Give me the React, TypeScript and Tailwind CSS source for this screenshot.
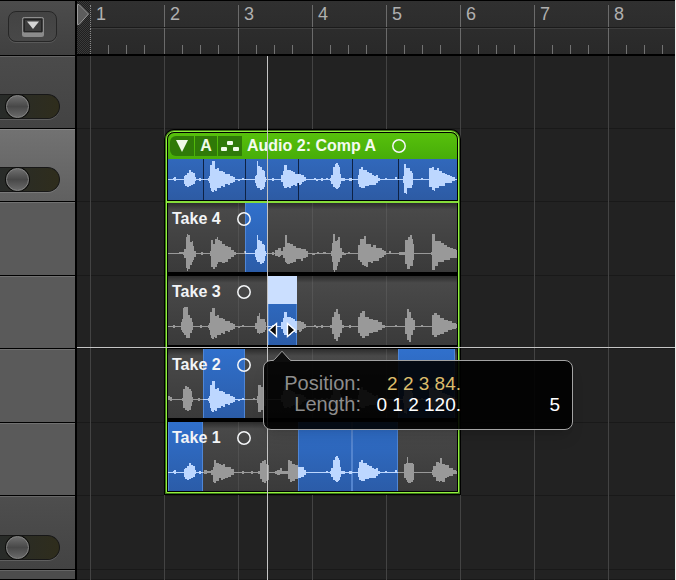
import React, { useState } from 'react';

// [x, height above the centre line, height below it]
type WavePoint = [number, number, number];

interface Range {
  from: number;
  to: number;
}

interface Take {
  id: string;
  name: string;
  wave: WavePoint[];
  picks: Range[];
  splits?: number[];
  selected?: Range;
}

interface Track {
  id: string;
  height: string;
  background: string;
  hasSlider?: boolean;
}

const REGION_WIDTH = 289;

const bars = [1, 2, 3, 4, 5, 6, 7, 8];

const tracks: Track[] = [
  { id: 'track-1', height: 'h-[73px]', background: 'bg-linear-to-b from-[#4b4b4b] to-[#434343]', hasSlider: true },
  { id: 'track-2', height: 'h-[73px]', background: 'bg-linear-to-b from-[#727272] to-[#606060]', hasSlider: true },
  { id: 'take-4', height: 'h-[74px]', background: 'bg-[#5a5a5a]' },
  { id: 'take-3', height: 'h-[73px]', background: 'bg-[#5a5a5a]' },
  { id: 'take-2', height: 'h-[74px]', background: 'bg-[#5a5a5a]' },
  { id: 'take-1', height: 'h-[73px]', background: 'bg-[#5a5a5a]' },
  { id: 'track-3', height: 'h-[74px]', background: 'bg-linear-to-b from-[#4e4e4e] to-[#434343]', hasSlider: true },
  { id: 'track-4', height: 'flex-1', background: 'bg-[#4c4c4c]' },
];

const hitA: WavePoint[] = [[5, 1, 0], [6, 2, 1], [8, 0, 0], [15, 0, 0], [16, 3, 4], [17, 4, 6], [19, 6, 7], [21, 9, 6], [23, 7, 5], [25, 6, 4], [27, 2, 1], [28, 0, 0], [31, 1, 1], [33, 0, 0]];
const hitB: WavePoint[] = [[38, 0, 0], [40, 1, 1], [41, 3, 3], [42, 14, 8], [43, 14, 11], [44, 18, 12], [46, 18, 10], [47, 10, 11], [49, 11, 8], [51, 8, 8], [53, 8, 6], [55, 7, 7], [57, 5, 4], [60, 5, 5], [62, 3, 3], [65, 2, 2], [67, 0, 0], [70, 0, 1], [72, 0, 0], [74, 1, 0], [76, 0, 0]];
const hitC: WavePoint[] = [[84, 0, 0], [87, 3, 3], [88, 4, 6], [89, 18, 8], [90, 13, 8], [92, 12, 10], [94, 9, 9], [96, 8, 7], [97, 2, 2], [98, 0, 0], [104, 1, 1], [106, 0, 0]];
const hitD: WavePoint[] = [[112, 0, 0], [113, 4, 2], [115, 8, 6], [116, 14, 8], [118, 14, 8], [119, 9, 7], [121, 9, 8], [123, 8, 6], [125, 7, 5], [127, 5, 6], [129, 5, 3], [131, 5, 5], [133, 4, 4], [134, 4, 2], [136, 2, 1], [138, 0, 0], [146, 1, 0], [148, 0, 1], [150, 0, 0], [153, 1, 1], [155, 0, 0]];
const hitE: WavePoint[] = [[158, 1, 0], [160, 0, 0], [162, 1, 1], [163, 4, 4], [165, 12, 7], [167, 15, 8], [168, 16, 9], [170, 14, 8], [171, 12, 7], [172, 5, 4], [173, 1, 1], [177, 0, 0], [181, 1, 1], [184, 0, 0]];
const hitF: WavePoint[] = [[188, 0, 0], [190, 4, 4], [191, 10, 7], [193, 12, 8], [195, 9, 8], [197, 9, 6], [199, 7, 6], [201, 6, 5], [204, 4, 5], [206, 3, 5], [208, 4, 3], [210, 1, 1], [212, 0, 0], [217, 1, 0], [219, 0, 0], [227, 2, 0], [229, 0, 0]];
const hitG: WavePoint[] = [[234, 0, 0], [235, 3, 3], [236, 15, 13], [238, 11, 14], [239, 11, 8], [242, 8, 8], [244, 6, 5], [245, 0, 0], [251, 0, 0], [253, 1, 0], [255, 0, 0]];
const hitH: WavePoint[] = [[260, 0, 0], [261, 11, 7], [264, 12, 10], [266, 9, 11], [267, 9, 8], [269, 11, 8], [271, 8, 6], [274, 6, 6], [277, 5, 3], [279, 4, 3], [282, 3, 3], [284, 2, 1], [287, 0, 0]];

const compWave = [...hitA, ...hitB, ...hitC, ...hitD, ...hitE, ...hitF, ...hitG, ...hitH];

const take4Wave: WavePoint[] = [
  [9, 0, 0], [11, 1, 0], [15, 1, 1], [16, 4, 4], [18, 16, 14], [19, 19, 17], [20, 18, 15], [22, 11, 11], [24, 12, 8], [25, 7, 6], [26, 2, 3], [28, 0, 0], [33, 1, 1], [35, 0, 0],
  [42, 2, 2], [43, 13, 13], [45, 9, 15], [47, 14, 13], [49, 16, 10], [50, 13, 8], [52, 12, 8], [54, 9, 9], [57, 7, 8], [60, 6, 5], [63, 3, 3], [66, 1, 1], [68, 0, 0], [74, 0, 0], [76, 2, 0], [78, 0, 0],
  ...hitC,
  [107, 3, 2], [110, 5, 3], [112, 5, 2], [113, 2, 1], [115, 6, 4], [117, 18, 8], [118, 18, 9], [119, 10, 10], [122, 9, 9], [125, 7, 8], [128, 5, 5], [131, 5, 5], [133, 4, 7], [135, 4, 4], [138, 2, 3], [140, 0, 0], [144, 0, 1], [147, 0, 0], [149, 1, 0], [151, 0, 0], [155, 1, 0], [158, 0, 0],
  [163, 2, 2], [164, 10, 8], [165, 19, 16], [166, 19, 18], [167, 12, 16], [169, 13, 12], [170, 16, 8], [172, 5, 4], [174, 1, 1], [176, 0, 1], [178, 0, 0], [180, 1, 0], [182, 0, 0],
  [188, 0, 0], [190, 8, 6], [192, 14, 8], [194, 14, 11], [196, 17, 12], [198, 9, 13], [200, 9, 8], [203, 6, 9], [205, 8, 7], [208, 5, 7], [211, 5, 4], [214, 3, 3], [216, 2, 1], [218, 0, 0], [221, 2, 0], [223, 0, 0], [231, 1, 1],
  [236, 1, 1], [237, 13, 10], [239, 13, 15], [240, 16, 15], [242, 18, 12], [244, 14, 12], [245, 9, 6], [246, 0, 0], [260, 0, 0],
  [263, 1, 1], [264, 19, 16], [267, 12, 12], [270, 12, 8], [273, 10, 8], [276, 8, 6], [279, 6, 6], [282, 5, 4], [285, 4, 4], [288, 3, 4],
];

const take3Wave: WavePoint[] = [
  [5, 1, 1], [7, 0, 0], [13, 4, 3], [14, 7, 5], [15, 18, 6], [16, 19, 8], [18, 19, 11], [20, 11, 11], [22, 8, 6], [24, 4, 3], [25, 0, 0], [32, 1, 1], [34, 0, 0],
  ...hitB,
  [84, 0, 0], [87, 3, 2], [89, 10, 6], [91, 13, 7], [92, 7, 6], [95, 7, 5], [97, 4, 3], [98, 0, 0], [104, 1, 1], [106, 0, 0],
  ...hitD,
  [162, 1, 1], [164, 9, 7], [166, 14, 12], [168, 17, 14], [170, 12, 10], [172, 6, 6], [174, 1, 1], [176, 0, 0], [181, 1, 1], [183, 0, 0],
  [190, 9, 6], [192, 13, 9], [194, 15, 11], [197, 9, 9], [201, 7, 6], [205, 6, 5], [210, 4, 3], [214, 1, 1], [217, 0, 0], [227, 1, 0], [229, 0, 0],
  [237, 8, 7], [239, 17, 13], [241, 14, 15], [243, 8, 8], [245, 6, 3], [247, 0, 0], [253, 1, 0], [255, 0, 0],
  [264, 11, 8], [266, 13, 10], [269, 11, 8], [272, 8, 7], [276, 6, 5], [280, 5, 3], [284, 3, 2], [288, 2, 1],
];

const take2Wave: WavePoint[] = [
  [0, 3, 0], [2, 2, 1], [4, 0, 0], [14, 1, 1], [15, 10, 8], [17, 13, 10], [19, 12, 11], [21, 10, 10], [23, 8, 6], [24, 2, 2], [25, 0, 0], [30, 1, 1], [32, 0, 0],
  ...hitB,
  [85, 1, 0], [87, 0, 0], [89, 3, 3], [90, 14, 12], [93, 12, 10], [96, 9, 6], [98, 0, 0],
  ...hitD, ...hitE, ...hitF, ...hitG, ...hitH,
];

const take1Wave: WavePoint[] = [
  ...hitA,
  [36, 2, 1], [39, 1, 0], [43, 2, 2], [45, 5, 9], [46, 12, 10], [48, 9, 8], [51, 8, 5], [53, 7, 7], [55, 8, 6], [57, 5, 5], [60, 5, 4], [63, 3, 2], [66, 0, 0], [74, 1, 1], [76, 0, 0], [83, 1, 1], [85, 0, 0],
  [90, 1, 1], [92, 9, 6], [94, 11, 9], [96, 12, 10], [98, 8, 8], [100, 7, 7], [101, 0, 0], [107, 1, 1], [109, 2, 2], [112, 4, 1], [114, 1, 1],
  [119, 1, 1], [120, 12, 6], [122, 11, 9], [124, 8, 8], [127, 7, 6], [130, 5, 5], [133, 5, 4], [136, 2, 2], [138, 0, 0],
  ...hitE, ...hitF,
  [235, 0, 0], [236, 8, 5], [238, 9, 7], [239, 15, 9], [240, 9, 10], [243, 9, 9], [245, 8, 7], [246, 0, 0], [262, 0, 0],
  [264, 2, 2], [265, 6, 4], [268, 10, 8], [271, 9, 9], [272, 14, 8], [274, 8, 9], [277, 7, 5], [279, 7, 4], [281, 4, 3], [285, 2, 1], [288, 1, 1],
];

const takes: Take[] = [
  { id: 'take-4', name: 'Take 4', wave: take4Wave, picks: [{ from: 77, to: 100 }] },
  { id: 'take-3', name: 'Take 3', wave: take3Wave, picks: [{ from: 100, to: 129 }], selected: { from: 100, to: 129 } },
  { id: 'take-2', name: 'Take 2', wave: take2Wave, picks: [{ from: 35, to: 77 }, { from: 230, to: 287 }] },
  { id: 'take-1', name: 'Take 1', wave: take1Wave, picks: [{ from: 0, to: 35 }, { from: 130, to: 230 }], splits: [183] },
];

const compSplits = [35, 77, 130, 184, 230];

const percent = (value: number) => `${(value / REGION_WIDTH) * 100}%`;

// Each peak holds its level until the next one, so the outline is stepped
const wavePath = (wave: WavePoint[], center: number) => {
  const top = wave.map(([x, up]) => `H${x}V${center - up - 0.5}`).join('');
  const bottom = [...wave]
    .reverse()
    .map(([x, , down]) => `V${center + down + 0.5}H${x}`)
    .join('');
  return `M0 ${center - 0.5}${top}H${REGION_WIDTH}${bottom}V${center + 0.5}H0Z`;
};

function Waveform({ id, wave, height, center, picks }: { id: string; wave: WavePoint[]; height: number; center: number; picks: Range[] }) {
  const d = wavePath(wave, center);
  return (
    <svg
      className="absolute inset-0 h-full w-full"
      viewBox={`0 0 ${REGION_WIDTH} ${height}`}
      preserveAspectRatio="none"
      aria-hidden="true"
    >
      <clipPath id={`${id}-picks`}>
        {picks.map(pick => (
          <rect key={pick.from} x={pick.from} y={0} width={pick.to - pick.from} height={height} />
        ))}
      </clipPath>
      <path d={d} className="fill-[#999999]" />
      <path d={d} className="fill-[#bdd7ff]" clipPath={`url(#${id}-picks)`} />
    </svg>
  );
}

function RecordDot({ label }: { label: string }) {
  return (
    <button type="button" aria-label={label} className="block">
      <svg width="14" height="14" viewBox="0 0 14 14" fill="none">
        <circle cx="7" cy="7" r="6.200" stroke="#f4f6f8" strokeWidth="1.500" />
      </svg>
    </button>
  );
}

function TrackHeader({ track }: { track: Track }) {
  const [volume, setVolume] = useState(17);

  return (
    <div className={`${track.height} ${track.background} flex shrink-0 flex-col justify-end border-b border-black pb-[9px] shadow-[inset_0_1px_0_rgba(255,255,255,0.14)]`}>
      {track.hasSlider && (
        <input
          type="range"
          aria-label="Volume"
          value={volume}
          onChange={e => setVolume(Number(e.target.value))}
          className="block h-[25px] w-[60px] appearance-none rounded-r-full border border-l-0 border-[#171717] bg-linear-to-r from-[#282b29] to-[#2f2d1c] shadow-[0_1px_0_rgba(255,255,255,0.15)] [&::-webkit-slider-thumb]:h-[23px] [&::-webkit-slider-thumb]:w-[23px] [&::-webkit-slider-thumb]:appearance-none [&::-webkit-slider-thumb]:rounded-full [&::-webkit-slider-thumb]:border [&::-webkit-slider-thumb]:border-[#868686] [&::-webkit-slider-thumb]:bg-linear-to-b [&::-webkit-slider-thumb]:from-[#6e6e6e] [&::-webkit-slider-thumb]:via-[#484848] [&::-webkit-slider-thumb]:to-[#6a6a6a] [&::-webkit-slider-thumb]:shadow-[0_0_0_1px_#0c0c0c]"
        />
      )}
    </div>
  );
}

function Sidebar() {
  return (
    <aside className="flex w-[77px] shrink-0 flex-col border-r-2 border-black">
      <div className="flex h-14 shrink-0 items-start border-y border-black bg-linear-to-b from-[#4c4c4c] to-[#404040] pt-2.5 pl-2">
        <button
          type="button"
          aria-label="Global tracks"
          className="flex h-[31px] w-[49px] items-center justify-center rounded-lg border border-[#262626] bg-linear-to-b from-[#434343] to-[#484848] shadow-[0_1px_0_rgba(255,255,255,0.12)]"
        >
          <svg width="24" height="22" viewBox="0 0 24 22" fill="none">
            <rect x="1" y="1" width="22" height="20" rx="2.5" fill="#8b8b8b" />
            <rect x="1.5" y="1.5" width="21" height="15.5" rx="2" fill="#3d3d3d" stroke="#8f8f8f" />
            <rect x="3.5" y="3.5" width="17" height="12" stroke="#242424" />
            <path d="M6 5.500H18L12 13Z" fill="#d4d4d4" />
          </svg>
        </button>
      </div>
      {tracks.map(track => (
        <TrackHeader key={track.id} track={track} />
      ))}
    </aside>
  );
}

function Ruler() {
  return (
    <div className="relative flex h-14 shrink-0 overflow-hidden border-t border-b-2 border-black bg-linear-to-b from-[#303030] to-[#292929]">
      <div className="w-[13px] shrink-0 bg-[repeating-conic-gradient(#1f1f1f_0_25%,#3a3a3a_0_50%)] bg-[length:2px_2px]">
        <svg className="mt-[3px]" width="13" height="21" viewBox="0 0 13 21">
          <path d="M0.500 0.500H2L11.500 10L2 20.500H0.500Z" fill="#5d5d5d" stroke="#9a9a9a" />
        </svg>
      </div>
      {bars.map(bar => (
        <div key={bar} className="flex w-[74px] shrink-0 flex-col">
          <div className="flex h-[27px] items-center border-b border-[#1b1b1b] pt-1">
            <span className={`flex h-full items-center border-l pl-[5px] text-[18px] leading-none text-[#b0b0b0] ${bar === 1 ? 'border-dotted border-[#8a8a8a]' : 'border-[#6b6b6b]'}`}>
              <span className="-mt-1">{bar}</span>
            </span>
          </div>
          <div className={`flex flex-1 items-end border-l pl-[17px] shadow-[inset_0_1px_0_#3e3e3e] ${bar === 1 ? 'border-dotted border-[#8a8a8a]' : 'border-[#6b6b6b]'}`}>
            <span className="h-[9px] w-[18px] border-l border-[#727272]" />
            <span className="h-[9px] w-[18px] border-l border-[#727272]" />
            <span className="h-[9px] w-[18px] border-l border-[#727272]" />
          </div>
        </div>
      ))}
    </div>
  );
}

function TakeLane({ take }: { take: Take }) {
  return (
    <div className="relative h-[70px] overflow-hidden border-b border-black bg-linear-to-b from-[#2c2c2c] via-[#494949] via-10% to-[#3a3a3a]">
      {/* Bar lines showing through the lane */}
      <div className="absolute inset-y-0 left-[-4px] flex">
        {bars.slice(0, 4).map(bar => (
          <span key={bar} className="w-[74px] border-l border-white/8" />
        ))}
      </div>
      {take.picks.map(pick => (
        <div
          key={pick.from}
          className="absolute inset-y-0 border-x border-[#4f86d6] bg-linear-to-b from-[#3070cc] to-[#2b5ca8]"
          style={{ left: percent(pick.from), width: percent(pick.to - pick.from) }}
        />
      ))}
      {take.splits?.map(split => (
        <div key={split} className="absolute inset-y-0 w-0.5 bg-[#5485cf]" style={{ left: percent(split) }} />
      ))}
      {take.selected && (
        <div
          className="absolute top-0 h-7 bg-[#cbdfff]"
          style={{ left: percent(take.selected.from), width: percent(take.selected.to - take.selected.from) }}
        />
      )}
      <Waveform id={take.id} wave={take.wave} height={69} center={50.5} picks={take.picks} />
      <div className="relative flex h-8 items-center pl-1">
        <span className="w-[65px] text-base leading-none font-bold text-[#f2f4f6]">{take.name}</span>
        <RecordDot label={`Record ${take.name}`} />
      </div>
    </div>
  );
}

function TakeFolder() {
  return (
    <section className="w-[293px] rounded-t-lg border border-[#93f03f] bg-black shadow-[0_0_0_1px_#3f7a17,0_0_0_2px_#000000]">
      {/* Comp header */}
      <div className="mx-px mt-px flex h-[26px] items-center overflow-hidden rounded-t-md bg-linear-to-b from-[#57c00c] to-[#47ad09] pl-0.5">
        <div className="flex gap-px">
          <button type="button" aria-label="Close take folder" className="flex h-5 w-6 items-center justify-center rounded-l-md bg-[#2f7a08]">
            <svg width="12" height="12" viewBox="0 0 12 12">
              <path d="M0 0H12L6 12Z" fill="#f0fbe8" />
            </svg>
          </button>
          <button type="button" className="h-5 w-[22px] bg-[#2f7a08] text-base leading-none font-bold text-[#f0fbe8]">A</button>
          <button type="button" aria-label="Quick swipe comping" className="flex h-5 w-6 items-center justify-center bg-[#2f7a08]">
            <svg width="18" height="12" viewBox="0 0 18 12" fill="#f0fbe8">
              <rect x="6" y="1" width="6" height="4" rx="1" />
              <rect x="0" y="7" width="6" height="4" rx="1" />
              <rect x="12" y="7" width="6" height="4" rx="1" />
            </svg>
          </button>
        </div>
        <h2 className="ml-[5px] text-base leading-none font-bold whitespace-nowrap text-[#f4faf0]">Audio 2: Comp A</h2>
        <div className="ml-4">
          <RecordDot label="Record comp" />
        </div>
      </div>
      <div className="relative mx-px mb-px h-[41px] overflow-hidden bg-linear-to-b from-[#3168bb] to-[#2d5ba4]">
        {compSplits.map(split => (
          <div key={split} className="absolute inset-y-0 border-l border-[#0e2244]" style={{ left: percent(split) }} />
        ))}
        <Waveform id="comp" wave={compWave} height={41} center={20.5} picks={[{ from: 0, to: REGION_WIDTH }]} />
      </div>
      {/* Takes */}
      <div className="flex flex-col gap-[3px] border-t-2 border-[#86dd3a] px-px">
        {takes.map(take => (
          <TakeLane key={take.id} take={take} />
        ))}
      </div>
    </section>
  );
}

function PositionTooltip() {
  return (
    <div className="absolute top-[304px] left-[186px] w-[310px] rounded-lg border border-[#a3a3a3] bg-black/90 px-3 pt-3 pb-3.5 shadow-lg">
      <svg className="absolute -top-[11px] left-2" width="20" height="12" viewBox="0 0 20 12">
        <path d="M0 12L1 11L10 1L19 11L20 12Z" fill="#0d0d0d" />
        <path d="M0 10.500C1.500 10.500 2 10 3 9L10 1.200L17 9C18 10 18.500 10.500 20 10.500" fill="none" stroke="#a3a3a3" />
      </svg>
      <dl className="grid grid-cols-[85px_100px_1fr] text-right text-[19px] leading-[21px] whitespace-nowrap text-white">
        <dt className="text-[20px] text-[#8d8d8d]">Position:</dt>
        <dd className="text-[#dcbd6c]">2 2 3 84.</dd>
        <dd />
        <dt className="text-[20px] text-[#8d8d8d]">Length:</dt>
        <dd>0 1 2 120.</dd>
        <dd>5</dd>
      </dl>
    </div>
  );
}

function Arrangement() {
  return (
    <main className="relative flex-1 overflow-hidden bg-[#222222]">
      {/* Grid */}
      <div className="absolute inset-0 flex flex-col">
        {tracks.map(track => (
          <div key={track.id} className={`${track.height} shrink-0 border-b border-[#191919]`} />
        ))}
      </div>
      <div className="absolute inset-0 flex pl-[13px]">
        {bars.map(bar => (
          <div key={bar} className="w-[74px] shrink-0 border-l border-[#434343]" />
        ))}
      </div>
      <div className="relative pt-[75px] pl-[89px]">
        <TakeFolder />
      </div>
      {/* Pointer crosshair */}
      <div className="absolute inset-y-0 left-[190px] w-px bg-[#c4c4c4]" />
      <div className="absolute inset-x-0 top-[291px] h-px bg-[#c4c4c4]" />
      <svg className="absolute top-[266px] left-[190px]" width="30" height="16" viewBox="0 0 30 16">
        <path d="M9.500 1.500V14.500L2 8Z" fill="#0b0b0b" stroke="#ffffff" strokeWidth="1.400" />
        <path d="M20.500 1.500V14.500L28 8Z" fill="#0b0b0b" stroke="#ffffff" strokeWidth="1.400" />
      </svg>
      <PositionTooltip />
    </main>
  );
}

export default function App() {
  return (
    <div className="flex min-h-screen bg-[#eeeeee] pr-px pb-px font-['Liberation_Sans',Arial,sans-serif]">
      <Sidebar />
      <div className="flex min-w-0 flex-1 flex-col">
        <Ruler />
        <Arrangement />
      </div>
    </div>
  );
}
